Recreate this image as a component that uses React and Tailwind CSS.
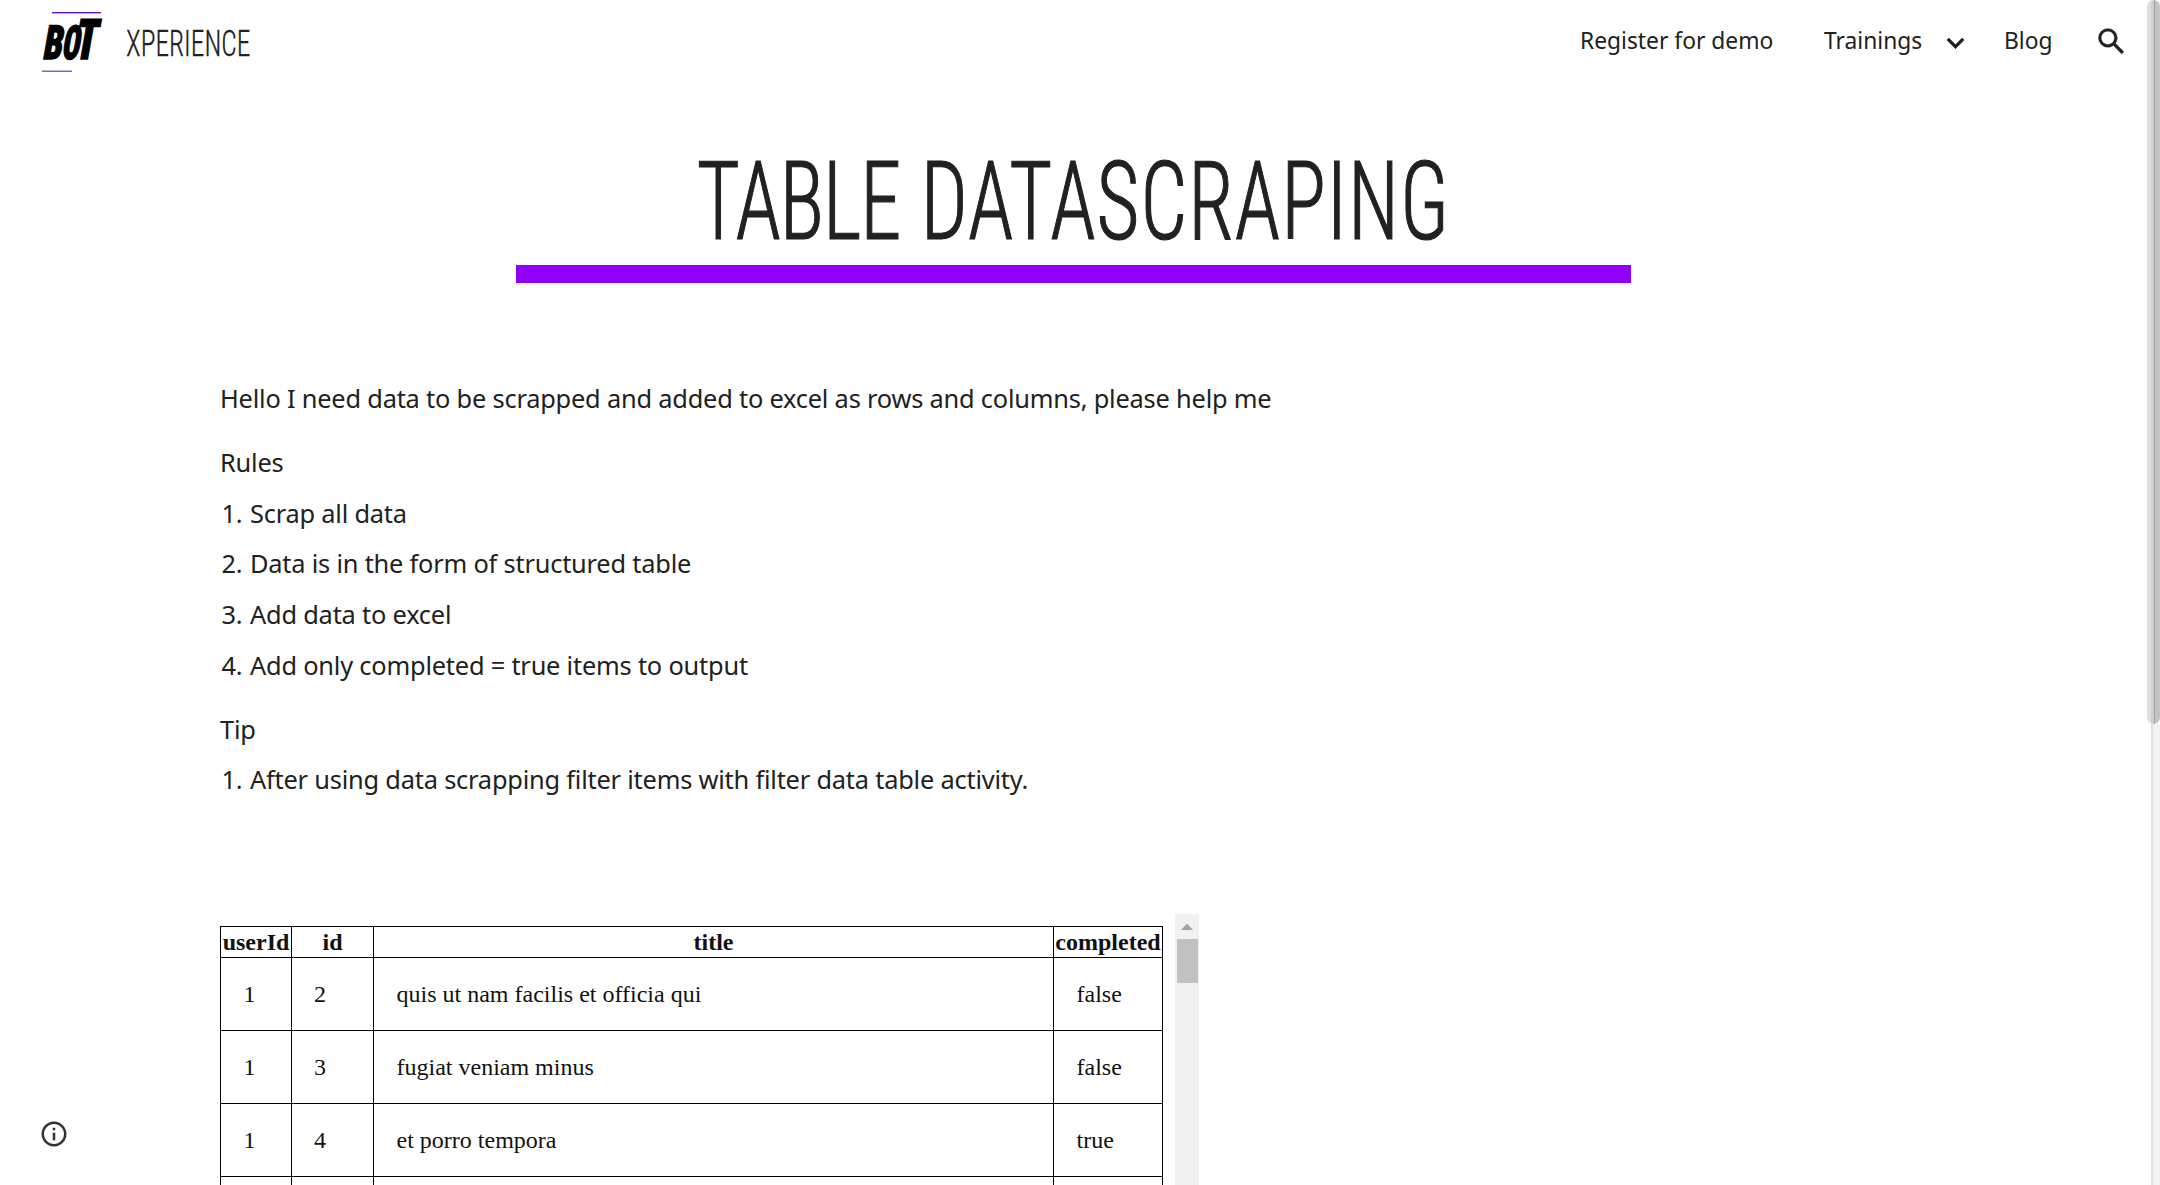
const RULES = [
  "Scrap all data",
  "Data is in the form of structured table",
  "Add data to excel",
  "Add only completed = true items to output",
];

const TIPS = ["After using data scrapping filter items with filter data table activity."];

const ROWS = [
  { userId: 1, id: 2, title: "quis ut nam facilis et officia qui", completed: "false" },
  { userId: 1, id: 3, title: "fugiat veniam minus", completed: "false" },
  { userId: 1, id: 4, title: "et porro tempora", completed: "true" },
  { userId: "", id: "", title: "", completed: "" },
];

function Logo() {
  return (
    <svg className="h-[64px] w-[64px] shrink-0 overflow-visible" viewBox="0 0 64 64" aria-label="BOT">
      <rect x="13" y="4" width="49" height="1.4" fill="#6a0fc9" />
      <g className="[font-stretch:75%]" fontFamily="Roboto, sans-serif" fontWeight="900" fill="#000" stroke="#000" strokeWidth="1.5" strokeLinejoin="miter">
        <text transform="translate(3 50.5) skewX(-10)" fontSize="47" textLength="19" lengthAdjust="spacingAndGlyphs">B</text>
        <text transform="translate(22 50.5) skewX(-10)" fontSize="47" textLength="17.5" lengthAdjust="spacingAndGlyphs">O</text>
        <text transform="translate(34 50.5) skewX(-10)" fontSize="56" textLength="22.5" lengthAdjust="spacingAndGlyphs">T</text>
      </g>
      <rect x="3" y="62.6" width="30" height="1.2" fill="#6b3fb0" />
    </svg>
  );
}

function Header() {
  return (
    <header className="flex h-[83px] shrink-0 items-start">
      <div className="flex pt-2 pl-[39px]">
        <Logo />
        <div className="ml-[23px] w-[150px] origin-left scale-x-[0.75] pt-[14px] font-['Roboto'] text-[36.5px] leading-[43px] font-light whitespace-nowrap [font-stretch:75%] [-webkit-text-stroke:0.3px_#212121]">
          XPERIENCE
        </div>
      </div>
      <nav className="ml-auto flex h-[83px] items-center pr-[18px] text-[22.8px] leading-8">
        <a className="w-[244px] pb-[2px]">Register for demo</a>
        <a className="w-[114px] pb-[2px]">Trainings</a>
        <svg className="mt-[3px] mr-[31px] h-[35px] w-[35px]" viewBox="0 0 24 24" fill="none" stroke="currentColor" strokeWidth="2.2">
          <path d="m6.7 8.9 5.3 5.3 5.3-5.3" />
        </svg>
        <a className="w-[90px] pb-[2px]">Blog</a>
        <svg className="h-[35px] w-[35px]" viewBox="0 0 24 24" fill="currentColor" stroke="currentColor" strokeWidth="0.2">
          <path d="M20.49 19l-5.73-5.73C15.53 12.2 16 10.91 16 9.5A6.5 6.5 0 1 0 9.5 16c1.41 0 2.7-.47 3.77-1.24L19 20.49 20.49 19zM5 9.5C5 7.01 7.01 5 9.5 5S14 7.01 14 9.5 11.99 14 9.5 14 5 11.99 5 9.5z" />
        </svg>
      </nav>
    </header>
  );
}

function NumberedList({ items }) {
  return (
    <ol>
      {items.map((item, i) => (
        <li key={item} className="mb-[16.7px] flex h-[34px]">
          <span className="w-[30px] pl-[1.5px]">{i + 1}.</span>
          <span>{item}</span>
        </li>
      ))}
    </ol>
  );
}

function DataTable() {
  return (
    <section className="mt-[101px] flex h-[271px] overflow-hidden font-['Liberation_Serif'] text-[24px] leading-[28px] tracking-normal text-[#111]">
      <table className="mt-[12px] w-[943px] shrink-0 table-fixed border-collapse self-start">
        <colgroup>
          <col className="w-[71px]" />
          <col className="w-[82px]" />
          <col className="w-[680px]" />
          <col className="w-[109px]" />
        </colgroup>
        <thead>
          <tr className="h-[31px]">
            {["userId", "id", "title", "completed"].map((name) => (
              <th key={name} className="border border-black p-0 font-bold">{name}</th>
            ))}
          </tr>
        </thead>
        <tbody>
          {ROWS.map((row, i) => (
            <tr key={i} className="h-[73px]">
              <td className="border border-black p-0 pl-[22.5px]">{row.userId}</td>
              <td className="border border-black p-0 pl-[22px]">{row.id}</td>
              <td className="border border-black p-0 pl-[22.5px]">{row.title}</td>
              <td className="border border-black p-0 pl-[22.5px]">{row.completed}</td>
            </tr>
          ))}
        </tbody>
      </table>
      <div className="ml-[12px] flex w-[24px] flex-col items-center bg-[#f1f1f1]">
        <svg className="mt-[9px] h-[7px] w-[12px]" viewBox="0 0 12 7" fill="#a3a3a3">
          <path d="M6 0.5 12 7H0z" />
        </svg>
        <div className="mt-[9px] h-[44px] w-[21px] bg-[#c1c1c1]" />
      </div>
    </section>
  );
}

export default function App() {
  return (
    <div className="flex h-[1185px] w-[2160px] overflow-hidden bg-white font-['Noto_Sans',sans-serif] text-[#212121]">
      <div className="relative flex w-[2147px] shrink-0 flex-col">
        <Header />
        <div className="flex h-[182px] flex-col items-center">
          <h1 className="w-full scale-x-[0.755] pt-[55px] text-center font-['Roboto'] text-[109.5px] leading-[128px] font-light [font-stretch:75%] [-webkit-text-stroke:1.2px_#212121]">
            <span className="tracking-[-1.5px] [word-spacing:4px]">TABLE </span>
            <span className="tracking-[1.4px]">DATASCRAPING</span>
          </h1>
        </div>
        <div className="ml-[516px] h-[18px] w-[1115px] shrink-0 bg-[#9000f8]" />
        <main className="ml-[220px] flex flex-col pt-[98px] text-[25.4px] leading-[34px] tracking-[-0.21px]">
          <p className="mb-[30px]">Hello I need data to be scrapped and added to excel as rows and columns, please help me</p>
          <p className="mb-[16.5px]">Rules</p>
          <NumberedList items={RULES} />
          <p className="mt-[13.5px] mb-[16.5px]">Tip</p>
          <NumberedList items={TIPS} />
          <DataTable />
        </main>
        <svg className="absolute top-[1119px] left-[39px] h-[30px] w-[30px]" viewBox="0 0 24 24" fill="#333">
          <path d="M11 17h2v-6h-2v6zm1-15C6.48 2 2 6.48 2 12s4.48 10 10 10 10-4.48 10-10S17.52 2 12 2zm0 18c-4.41 0-8-3.59-8-8s3.59-8 8-8 8 3.590 8 8-3.59 8-8 8zM11 9h2V7h-2v2z" />
        </svg>
      </div>
      <div className="flex h-full w-[13px] shrink-0 flex-col items-end bg-white">
        <div className="flex h-[724px] w-[13px] shrink-0 overflow-hidden rounded-full">
          <div className="w-[4px] bg-[#dedede]" />
          <div className="w-[3px] bg-[#cfcfcf]" />
          <div className="w-px bg-[#a0a0a0]" />
          <div className="flex-1 bg-[#c3c3c3]" />
        </div>
        <div className="w-[9px] flex-1 border-l-2 border-[#e0e0e0] bg-[#f3f3f3]" />
      </div>
    </div>
  );
}
